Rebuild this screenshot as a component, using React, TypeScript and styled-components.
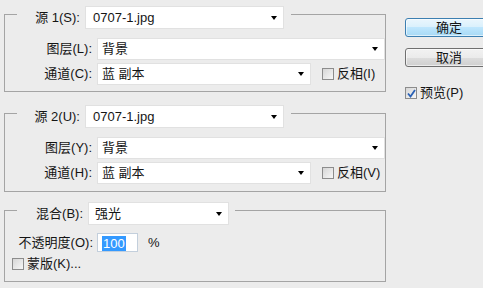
import styled, { createGlobalStyle } from 'styled-components';

const Global = createGlobalStyle`
  html, body {
    margin: 0;
    background: #ececec;
    overflow: hidden;
  }
  body {
    font-family: "Liberation Sans", "Noto Sans CJK SC", sans-serif;
    font-size: 13px;
    color: #151515;
  }
`;

const Dialog = styled.div`
  display: flex;
  height: 288px;
  padding: 6px 0 0 4px;
  box-sizing: border-box;
`;

const Main = styled.div`
  width: 389px;
  display: flex;
  flex-direction: column;
`;

const Panel = styled.div<{ $top: number; $bottom: number }>`
  margin-top: ${({ $top }) => $top}px;
  border: 1px solid #a4a4a4;
  padding-bottom: ${({ $bottom }) => $bottom}px;
  display: flex;
  flex-direction: column;
`;

// the source / blend row sits across the panel's top line
const Header = styled.div<{ $label: number; $pad: number }>`
  align-self: flex-start;
  display: flex;
  align-items: center;
  gap: 5px;
  margin: -9px 0 0 12px;
  padding-right: ${({ $pad }) => $pad}px;
  height: 23px;
  background: #ececec;

  & > label {
    width: ${({ $label }) => $label}px;
  }
`;

const Label = styled.label`
  text-align: right;
  white-space: nowrap;
  line-height: 16px;
`;

const Row = styled.div<{ $top: number }>`
  display: flex;
  align-items: center;
  gap: 5px;
  height: 22px;
  margin-top: ${({ $top }) => $top}px;

  & > label:first-child {
    width: 87px;
  }
`;

const Select = styled.div<{ $w: number; $inset: number }>`
  position: relative;
  box-sizing: border-box;
  width: ${({ $w }) => $w}px;
  height: 100%;
  padding-left: ${({ $inset }) => $inset}px;
  display: flex;
  align-items: center;
  background: #fff;
  border: 1px solid #e1e1e1;
  line-height: 16px;

  &::after {
    content: '';
    position: absolute;
    right: 6px;
    top: 50%;
    margin-top: -2px;
    border-left: 3.5px solid transparent;
    border-right: 3.5px solid transparent;
    border-top: 4px solid #000;
  }
`;

const CheckWrap = styled.label<{ $gap: number }>`
  display: flex;
  align-items: center;
  gap: 3px;
  margin-left: ${({ $gap }) => $gap}px;
  white-space: nowrap;
  line-height: 16px;
`;

const Box = styled.span`
  box-sizing: border-box;
  width: 12px;
  height: 12px;
  border: 1px solid #8c8c8c;
  background: linear-gradient(135deg, #d6d6d6, #f7f7f7);
  display: flex;
  align-items: center;
  justify-content: center;
`;

const OpacityRow = styled.div`
  display: flex;
  align-items: center;
  height: 19px;
  margin-top: 8px;
  gap: 4px;

  & > label:first-child {
    width: 88px;
  }
`;

const Input = styled.div`
  box-sizing: border-box;
  width: 41px;
  height: 19px;
  background: #fff;
  border: 1px solid #c3cfdc;
  padding: 1px 0 0 4px;
  display: flex;
  align-items: center;
`;

const Selected = styled.span`
  background: #3399ff;
  color: #fff;
  line-height: 15px;
  padding: 0 1px;
`;

const Percent = styled.span`
  margin-left: 6px;
`;

const MaskRow = styled.div`
  display: flex;
  height: 14px;
  margin-top: 5px;
  padding-left: 3px;
`;

const Side = styled.div`
  margin-left: 19px;
  padding-top: 12px;
  display: flex;
  flex-direction: column;
  gap: 11px;
`;

const Button = styled.div<{ $primary?: boolean }>`
  box-sizing: border-box;
  width: 88px;
  height: 19px;
  border-radius: 3px;
  border: 1px solid ${({ $primary }) => ($primary ? '#3c7fb1' : '#707070')};
  background: ${({ $primary }) =>
    $primary
      ? 'linear-gradient(#eaf6fd 0%, #d9f0fc 50%, #bee6fd 50%, #a7d9f5 100%)'
      : 'linear-gradient(#f2f2f2 0%, #ebebeb 50%, #dddddd 50%, #cfcfcf 100%)'};
  box-shadow: inset 0 0 0 1px rgba(255, 255, 255, 0.6);
  display: flex;
  align-items: center;
  justify-content: center;
  line-height: 16px;
`;

const Preview = styled(CheckWrap)`
  margin-top: 7px;
`;

function Check({ on }: { on?: boolean }) {
  return (
    <Box>
      {on && (
        <svg width="9" height="9" viewBox="0 0 9 9">
          <path d="M1 4.5 L3.5 7.5 L8 1" fill="none" stroke="#2a61b5" strokeWidth="1.8" />
        </svg>
      )}
    </Box>
  );
}

function SourcePanel({
  top,
  bottom,
  src,
  layerKey,
  channelKey,
  invertKey,
}: {
  top: number;
  bottom: number;
  src: string;
  layerKey: string;
  channelKey: string;
  invertKey: string;
}) {
  return (
    <Panel $top={top} $bottom={bottom}>
      <Header $label={63} $pad={7}>
        <Label>{src}</Label>
        <Select $w={199} $inset={7}>0707-1.jpg</Select>
      </Header>
      <Row $top={9}>
        <Label>图层({layerKey}):</Label>
        <Select $w={288} $inset={4}>背景</Select>
      </Row>
      <Row $top={3}>
        <Label>通道({channelKey}):</Label>
        <Select $w={214} $inset={4}>蓝 副本</Select>
        <CheckWrap $gap={6}>
          <Check />
          反相({invertKey})
        </CheckWrap>
      </Row>
    </Panel>
  );
}

export default function App() {
  return (
    <>
      <Global />
      <Dialog>
        <Main>
          <SourcePanel top={8} bottom={6} src="源 1(S):" layerKey="L" channelKey="C" invertKey="I" />
          <SourcePanel top={21} bottom={7} src="源 2(U):" layerKey="Y" channelKey="H" invertKey="V" />
          <Panel $top={18} $bottom={10}>
            <Header $label={66} $pad={6}>
              <Label>混合(B):</Label>
              <Select $w={141} $inset={6}>强光</Select>
            </Header>
            <OpacityRow>
              <Label>不透明度(O):</Label>
              <Input>
                <Selected>100</Selected>
              </Input>
              <Percent>%</Percent>
            </OpacityRow>
            <MaskRow>
              <CheckWrap $gap={4}>
                <Check />
                蒙版(K)...
              </CheckWrap>
            </MaskRow>
          </Panel>
        </Main>
        <Side>
          <Button $primary>确定</Button>
          <Button>取消</Button>
          <Preview $gap={0}>
            <Check on />
            预览(P)
          </Preview>
        </Side>
      </Dialog>
    </>
  );
}
